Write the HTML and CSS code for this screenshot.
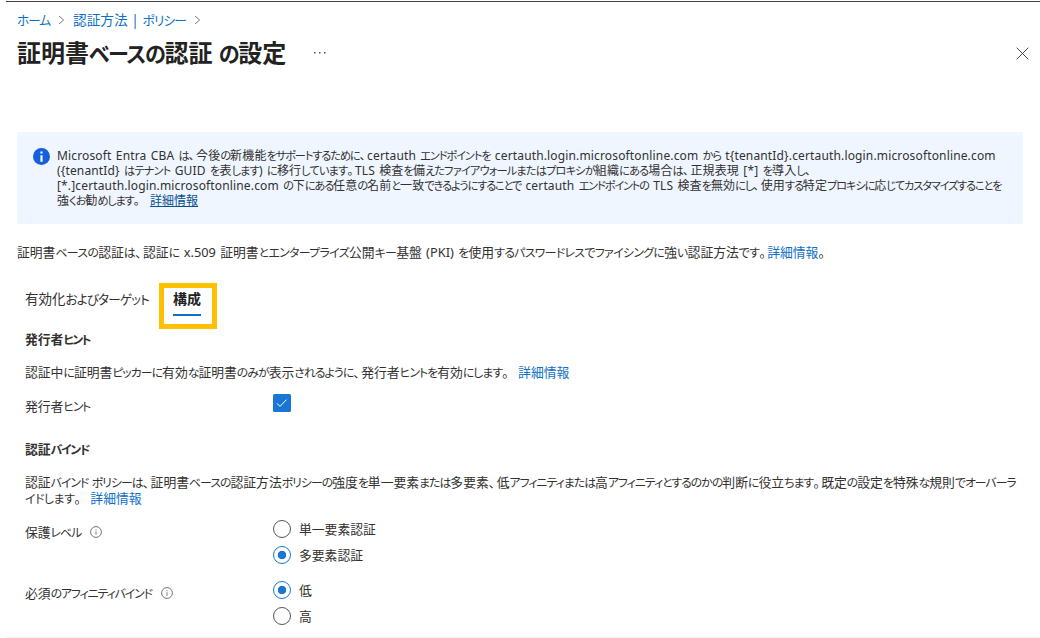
FILE: index.html
```html
<!DOCTYPE html>
<html lang="ja">
<head>
<meta charset="utf-8">
<title>証明書ベースの認証 の設定</title>
<link rel="stylesheet" href="styles.css">
</head>
<body>
<div class="page">
  <nav class="breadcrumb">
    <a class="crumb-home"><span class="k">ホーム</span></a>
    <svg class="chevron" viewBox="0 0 7 10"><path d="M1 1l4.6 4L1 9"/></svg>
    <a class="crumb-policy">認証方法 | <span class="k">ポリシー</span></a>
    <svg class="chevron" viewBox="0 0 7 10"><path d="M1 1l4.6 4L1 9"/></svg>
  </nav>
  <header class="title-bar">
    <h1>証明書<span class="k">ベースの</span>認証 <span class="k">の</span>設定</h1>
    <svg class="more" viewBox="0 0 12 2"><path d="M0 0h1.5v1.5H0zM5 0h1.5v1.5H5zM10 0h1.5v1.5H10z"/></svg>
    <svg class="close" viewBox="0 0 13 13"><path d="M.7.7l11.6 11.6M12.3.7L.7 12.3"/></svg>
  </header>
  <section class="banner">
    <svg class="info-solid" viewBox="0 0 16 16"><circle cx="8" cy="8" r="8"/><path d="M7 6.8h2V13H7zM7 3.2h2v2H7z"/></svg>
    <div class="banner-text">
      <div class="line-1">Microsoft Entra CBA <span class="k">は</span><span class="p">、</span>今後<span class="k">の</span>新機能<span class="k">をサポートするために</span><span class="p">、</span>certauth <span class="k">エンドポイントを</span> certauth.login.microsoftonline.com <span class="k">から</span> t{tenantId}.certauth.login.microsoftonline.com</div>
      <div class="line-2">({tenantId} <span class="k">はテナント</span> GUID <span class="k">を</span>表<span class="k">します</span>) <span class="k">に</span>移行<span class="k">しています</span><span class="p">。</span>TLS 検査<span class="k">を</span>備<span class="k">えたファイアウォールまたはプロキシが</span>組織<span class="k">にある</span>場合<span class="k">は</span><span class="p">、</span>正規表現 [*] <span class="k">を</span>導入<span class="k">し</span><span class="p">、</span></div>
      <div class="line-3">[*.]certauth.login.microsoftonline.com <span class="k">の</span>下<span class="k">にある</span>任意<span class="k">の</span>名前<span class="k">と</span>一致<span class="k">できるようにすることで</span> certauth <span class="k">エンドポイントの</span> TLS 検査<span class="k">を</span>無効<span class="k">にし</span><span class="p">、</span>使用<span class="k">する</span>特定<span class="k">プロキシに</span>応<span class="k">じてカスタマイズすることを</span></div>
      <div class="line-4">強<span class="k">くお</span>勧<span class="k">めします</span><span class="p">。</span><a class="more-link">詳細情報</a></div>
    </div>
  </section>
  <p class="intro">証明書<span class="k">ベースの</span>認証<span class="k">は</span><span class="p">、</span>認証<span class="k">に</span> x.509 証明書<span class="k">とエンタープライズ</span>公開<span class="k">キー</span>基盤 (PKI) <span class="k">を</span>使用<span class="k">するパスワードレスでファイシングに</span>強<span class="k">い</span>認証方法<span class="k">です</span><span class="p">。</span><a>詳細情報</a>。</p>
  <div class="tabs">
    <div class="tab">有効化<span class="k">およびターゲット</span></div>
    <div class="tab selected"><span>構成</span></div>
  </div>
  <main class="form">
    <h2 class="issuer-title">発行者<span class="k">ヒント</span></h2>
    <p class="issuer-text">認証中<span class="k">に</span>証明書<span class="k">ピッカーに</span>有効<span class="k">な</span>証明書<span class="k">のみが</span>表示<span class="k">されるように</span><span class="p">、</span>発行者<span class="k">ヒントを</span>有効<span class="k">にします</span><span class="p">。</span><a class="gap">詳細情報</a></p>
    <div class="row issuer-row">
      <label><span>発行者<span class="k">ヒント</span></span></label>
      <svg class="checkbox" viewBox="0 0 18 18"><rect width="18" height="18" rx="1.5"/><path d="M4 9.4l3 3L13.5 5.6"/></svg>
    </div>
    <h2 class="bind-title">認証<span class="k">バインド</span></h2>
    <div class="bind-text">
      <div class="bind-line">認証<span class="k">バインド</span> <span class="k">ポリシーは</span><span class="p">、</span>証明書<span class="k">ベースの</span>認証方法<span class="k">ポリシーの</span>強度<span class="k">を</span>単一要素<span class="k">または</span>多要素<span class="p">、</span>低<span class="k">アフィニティまたは</span>高<span class="k">アフィニティとするのかの</span>判断<span class="k">に</span>役立<span class="k">ちます</span><span class="p">。</span>既定<span class="k">の</span>設定<span class="k">を</span>特殊<span class="k">な</span>規則<span class="k">でオーバーラ</span></div>
      <div class="bind-end"><span class="k">イドします</span><span class="p">。</span><a class="gap">詳細情報</a></div>
    </div>
    <div class="row level-row">
      <label><span>保護<span class="k">レベル</span></span><svg class="info" viewBox="0 0 12 12"><circle cx="6" cy="6" r="5.4"/><path d="M6 5.3v3.4M6 3.2v1"/></svg></label>
      <div class="options">
        <div class="option"><i class="radio"></i>単一要素認証</div>
        <div class="option"><i class="radio on"></i>多要素認証</div>
      </div>
    </div>
    <div class="row affinity-row">
      <label><span>必須<span class="k">のアフィニティバインド</span></span><svg class="info" viewBox="0 0 12 12"><circle cx="6" cy="6" r="5.4"/><path d="M6 5.3v3.4M6 3.2v1"/></svg></label>
      <div class="options">
        <div class="option"><i class="radio on"></i>低</div>
        <div class="option"><i class="radio"></i>高</div>
      </div>
    </div>
  </main>
</div>
</body>
</html>
```
FILE: styles.css
```css
* { box-sizing: border-box; }
body {
  margin: 0;
  background: #fff;
  color: #323130;
  font: 12.8px/16px "Noto Sans", "Noto Sans CJK JP", sans-serif;
  font-feature-settings: "palt";
  white-space: nowrap;
}
h1, h2, p { margin: 0; }
a { color: #1070c8; text-decoration: none; }
svg { display: block; flex: none; fill: none; }

/* Condensed kana runs; --kana is the tracking of the run */
.k { font-size: .93em; letter-spacing: var(--kana, -1px); }
.p { letter-spacing: 1.5px; }

.page {
  width: 1040px;
  height: 638px;
  overflow: hidden;
  background:
    linear-gradient(#444, #444) 6px 1px / 1034px 1px no-repeat,
    linear-gradient(#f0f0f0, #f0f0f0) 6px 637px / 1034px 1px no-repeat;
}
.breadcrumb {
  display: flex;
  align-items: center;
  height: 40px;
  padding-left: 17px;
  font-size: 13.7px;
}
.crumb-home { --kana: -1.15px; }
.crumb-policy { --kana: -.87px; }
.chevron { width: 7px; height: 10px; margin: 0 8px; stroke: #777; }
.title-bar { display: flex; align-items: center; height: 26px; padding: 0 11px 0 17px; }
h1 { --kana: -1.35px; width: 270px; font-size: 24px; line-height: 26px; font-weight: 600; color: #222; }
h1 .k { font-size: .88em; }
.more { width: 12px; height: 2px; margin-left: 27px; fill: #555; }
.close { width: 13px; height: 13px; margin-left: auto; stroke: #444; }
.banner {
  display: flex;
  height: 92px;
  margin: 66px 17px 0;
  padding: 16px 0 0 16px;
  border-radius: 2px;
  background: #eff6ff;
}
.info-solid { width: 17px; height: 17px; margin-right: 7px; fill: #155fdc; }
.info-solid path { fill: #fff; }
.banner-text { padding-top: 1px; font-size: 12px; line-height: 14.9px; letter-spacing: .15px; word-spacing: 1px; }
.line-1 { --kana: -1.07px; }
.line-2 { --kana: -.82px; }
.line-3 { --kana: -1.13px; }
.line-4 { --kana: -1.17px; }
.more-link { margin-left: 9px; color: #0a5090; text-decoration: underline; letter-spacing: 0; }
.intro { --kana: -.64px; margin: 20px 0 0 17px; word-spacing: 1px; }
.tabs { --kana: -.83px; display: flex; height: 46px; margin: 23px 0 0 25px; line-height: 16px; font-size: 13.5px; }
.tab { width: 134px; padding-top: 8px; }
.tab.selected { width: 58px; padding: 3px 0 0 9px; border: 5px solid #ffc000; font-size: 14px; font-weight: 700; color: #222; }
.tab.selected span { display: block; width: 28px; height: 25px; border-bottom: 2px solid #1070c8; }
.form { padding-left: 25px; }
h2 { font-size: 12.8px; line-height: 16px; font-weight: 700; }
.issuer-title { --kana: -1.59px; margin-top: 2px; }
.issuer-text { --kana: -.96px; margin-top: 17px; }
.gap { margin-left: 8px; }
.row { display: flex; }
.row label { display: flex; width: 248px; padding-top: 4px; }
.issuer-row { --kana: -1.27px; margin-top: 14px; height: 18px; }
.checkbox { width: 18px; height: 18px; fill: #1976d2; }
.checkbox path { fill: none; stroke: #fff; }
.bind-title { --kana: -1.34px; margin-top: 29px; }
.bind-text { margin-top: 17px; }
.bind-line { --kana: -.97px; }
.bind-end { --kana: -.45px; }
.level-row { --kana: -1.1px; margin-top: 14px; }
.info { width: 12px; height: 12px; margin: 2px 0 0 9px; stroke: #666; stroke-width: .9; }
.options { display: flex; flex-direction: column; gap: 8px; }
.option { display: flex; align-items: center; height: 18px; gap: 8px; }
.radio { width: 18px; height: 18px; border: 1px solid #555; border-radius: 50%; }
.radio.on { border-color: #1976d2; background: radial-gradient(circle, #1976d2 3.8px, transparent 4.6px); }
.affinity-row { --kana: -1.08px; margin-top: 17px; }
```
